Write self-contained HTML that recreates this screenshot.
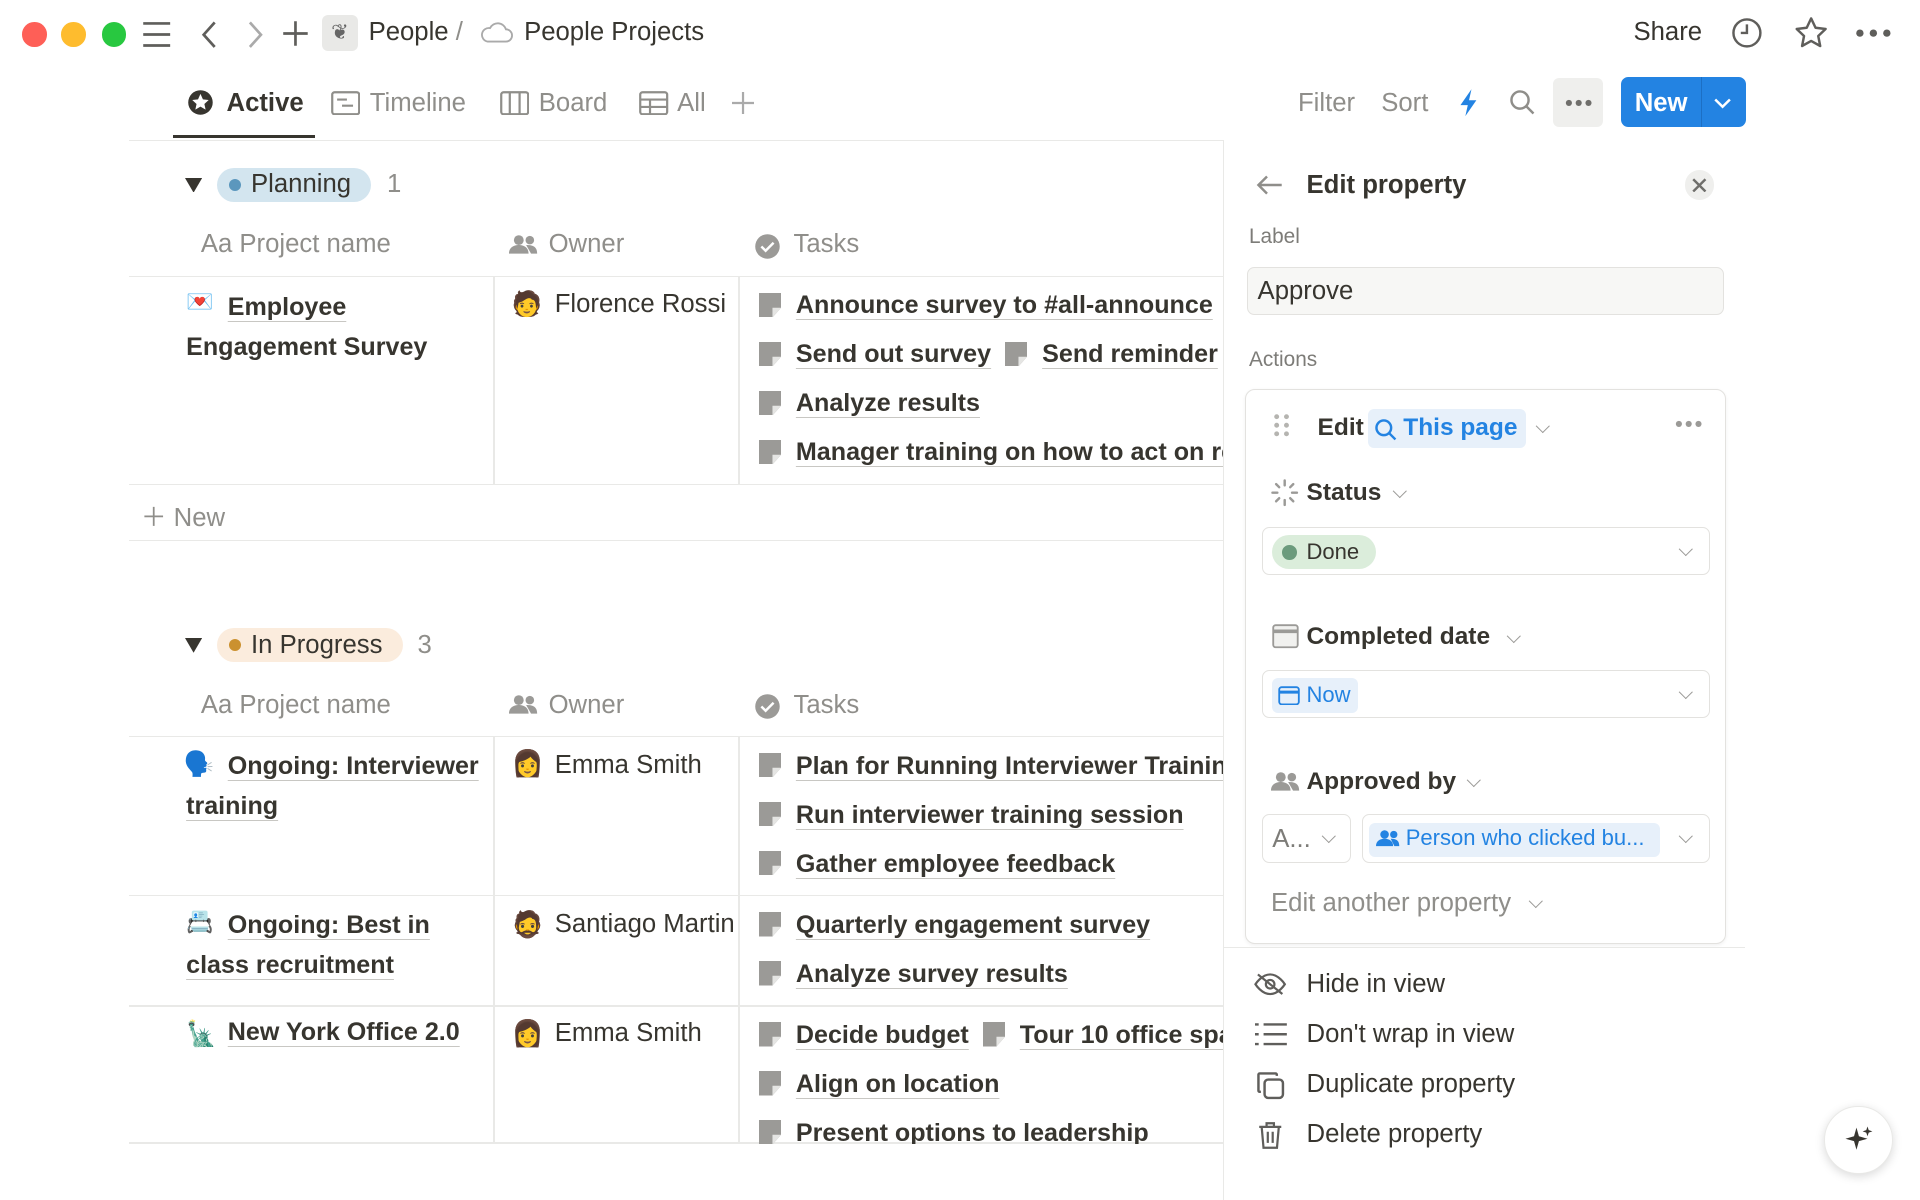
<!DOCTYPE html>
<html><head><meta charset="utf-8"><style>
html,body{margin:0;padding:0;background:#fff;overflow:hidden}
body{width:1920px;height:1200px}
#w{zoom:1.22449;width:1568px;height:980px;position:relative;font-family:"Liberation Sans",sans-serif;color:#37352f;font-size:21px}
.a{position:absolute;white-space:nowrap}
.hl{position:absolute;height:1px;background:#e9e9e7}
.vl{position:absolute;width:1px;background:#e9e9e7}
.g{color:#8f8e8a}
.u{text-decoration:underline;text-decoration-color:#c8c7c3;text-underline-offset:5px;text-decoration-thickness:1px;font-weight:bold;color:#37352f;font-size:20.5px}
.tl{position:absolute;width:20px;height:20px;border-radius:50%}
.ch{position:absolute;width:7px;height:7px;border-right:1.5px solid #9b9a97;border-bottom:1.5px solid #9b9a97;transform:rotate(45deg)}
.box{position:absolute;border:1px solid #e3e2df;border-radius:6px;background:#fff}
.d{display:inline-block;width:18px;height:20px;vertical-align:-3px;margin-right:12px}
.s{font-weight:bold}
</style></head><body><div id="w">
<svg width="0" height="0" style="position:absolute"><defs><symbol id="doc" viewBox="0 0 18 20"><path d="M0 0h18v12l-7 8H0z" fill="#9b9a97"/><path d="M11 20v-8h7" fill="#e5e5e3"/></symbol></defs></svg>
<!-- top bar -->
<div class="tl" style="left:18px;top:18px;background:#fe5f57"></div>
<div class="tl" style="left:50px;top:18px;background:#febc2e"></div>
<div class="tl" style="left:83px;top:18px;background:#28c840"></div>
<svg class="a" style="left:116px;top:17px" width="24" height="22"><path d="M1 2h22M1 11h22M1 20h22" stroke="#5f5e5b" stroke-width="2.2"/></svg>
<svg class="a" style="left:163px;top:16px" width="16" height="24"><path d="M12 2L3 12l9 10" stroke="#5f5e5b" stroke-width="2.2" fill="none"/></svg>
<svg class="a" style="left:200px;top:16px" width="16" height="24"><path d="M4 2l9 10-9 10" stroke="#aaa" stroke-width="2.2" fill="none"/></svg>
<svg class="a" style="left:230px;top:16px" width="22" height="22"><path d="M11 1v20M1 11h20" stroke="#5f5e5b" stroke-width="2.2"/></svg>
<div class="a" style="left:263px;top:12px;width:29px;height:30px;background:#e9e9e7;border-radius:5px;text-align:center;line-height:30px;font-size:17px;color:#666">❦</div>
<div class="a" style="left:301px;top:15px">People <span class="g">/</span></div>
<svg class="a" style="left:391px;top:18px" width="28" height="18"><path d="M7 16h15a5 5 0 0 0 0-10 7 7 0 0 0-13-1A5 5 0 0 0 7 16z" fill="none" stroke="#aaa" stroke-width="1.5"/></svg>
<div class="a" style="left:428px;top:15px">People Projects</div>
<div class="a" style="left:1334px;top:15px">Share</div>
<svg class="a" style="left:1414px;top:14px" width="26" height="26"><circle cx="13" cy="13" r="11" fill="none" stroke="#5f5e5b" stroke-width="2"/><path d="M13 6v7h-5" fill="none" stroke="#5f5e5b" stroke-width="2"/></svg>
<svg class="a" style="left:1465px;top:13px" width="28" height="28"><path d="M14 2l3.6 7.6 8.2 1-6 5.7 1.6 8.2L14 20.4l-7.4 4.1 1.6-8.2-6-5.7 8.2-1z" fill="none" stroke="#5f5e5b" stroke-width="2" stroke-linejoin="round"/></svg>
<svg class="a" style="left:1515px;top:22px" width="30" height="10"><circle cx="4" cy="5" r="3" fill="#5f5e5b"/><circle cx="15" cy="5" r="3" fill="#5f5e5b"/><circle cx="26" cy="5" r="3" fill="#5f5e5b"/></svg>
<!-- tabs -->
<svg class="a" style="left:153px;top:73px" width="22" height="22"><circle cx="11" cy="11" r="10" fill="#37352f"/><path d="M11 4l2 4.5 4.7.5-3.5 3.2 1 4.6L11 14.4 6.8 16.8l1-4.6L4.3 9l4.7-.5z" fill="#fff"/></svg>
<div class="a s" style="left:185px;top:73px">Active</div>
<div class="a" style="left:141px;top:110px;width:116px;height:3px;background:#37352f"></div>
<svg class="a" style="left:270px;top:74px" width="24" height="20"><rect x="1" y="1" width="22" height="18" rx="2" fill="none" stroke="#8f8e8a" stroke-width="1.8"/><path d="M5 7h8M9 12h9" stroke="#8f8e8a" stroke-width="1.8"/></svg>
<div class="a g" style="left:302px;top:73px">Timeline</div>
<svg class="a" style="left:408px;top:74px" width="24" height="20"><rect x="1" y="1" width="22" height="18" rx="2" fill="none" stroke="#8f8e8a" stroke-width="1.8"/><path d="M8 1v18M16 1v18" stroke="#8f8e8a" stroke-width="1.8"/></svg>
<div class="a g" style="left:440px;top:73px">Board</div>
<svg class="a" style="left:522px;top:74px" width="24" height="20"><rect x="1" y="1" width="22" height="18" rx="2" fill="none" stroke="#8f8e8a" stroke-width="1.8"/><path d="M1 7h22M1 13h22M9 7v12" stroke="#8f8e8a" stroke-width="1.8"/></svg>
<div class="a g" style="left:553px;top:73px">All</div>
<svg class="a" style="left:598px;top:75px" width="18" height="18"><path d="M9 0v18M0 9h18" stroke="#aaa" stroke-width="1.8"/></svg>
<div class="a g" style="left:1060px;top:73px">Filter</div>
<div class="a g" style="left:1128px;top:73px">Sort</div>
<svg class="a" style="left:1191px;top:72px" width="18" height="24"><path d="M11 1L2 14h6l-2 9 9-13H9z" fill="#2383e2"/></svg>
<svg class="a" style="left:1232px;top:73px" width="22" height="22"><circle cx="9" cy="9" r="7" fill="none" stroke="#8f8e8a" stroke-width="2"/><path d="M14 14l6 6" stroke="#8f8e8a" stroke-width="2"/></svg>
<div class="a" style="left:1268px;top:64px;width:41px;height:40px;background:#efefed;border-radius:5px"></div>
<svg class="a" style="left:1277px;top:80px" width="24" height="8"><circle cx="4" cy="4" r="2.5" fill="#6f6e6b"/><circle cx="12" cy="4" r="2.5" fill="#6f6e6b"/><circle cx="20" cy="4" r="2.5" fill="#6f6e6b"/></svg>
<div class="a" style="left:1324px;top:63px;width:102px;height:41px;background:#2383e2;border-radius:6px"></div>
<div class="a s" style="left:1335px;top:73px;color:#fff">New</div>
<div class="a" style="left:1389px;top:63px;width:1px;height:41px;background:#1c6fc4"></div>
<svg class="a" style="left:1400px;top:79px" width="14" height="10"><path d="M1 2l6 6 6-6" stroke="#fff" stroke-width="2" fill="none"/></svg>
<div class="hl" style="left:105px;top:114px;width:895px"></div>
<div class="vl" style="left:999px;top:114px;height:866px"></div>

<!-- Planning -->
<svg class="a" style="left:151px;top:145px" width="14" height="12"><path d="M0 0h14L7 12z" fill="#37352f"/></svg>
<div class="a" style="left:177px;top:137px;width:126px;height:28px;background:#d3e5ef;border-radius:14px"></div>
<div class="a" style="left:187px;top:146px;width:10px;height:10px;border-radius:50%;background:#5b97bd"></div>
<div class="a" style="left:205px;top:139px">Planning</div>
<div class="a g" style="left:316px;top:139px">1</div>
<div class="a g" style="left:164px;top:188px">Aa Project name</div>
<svg class="a" style="left:416px;top:191px" width="24" height="18"><circle cx="8" cy="5" r="4" fill="#9b9a97"/><circle cx="17" cy="5" r="3.5" fill="#9b9a97"/><path d="M0 16c0-5 4-7 8-7s8 2 8 7zM14 9c5 0 9 1 9 7h-5" fill="#9b9a97"/></svg>
<div class="a g" style="left:448px;top:188px">Owner</div>
<svg class="a" style="left:616px;top:190px" width="22" height="22"><circle cx="11" cy="11" r="10" fill="#9b9a97"/><path d="M6 11l3.5 3.5L16 8" stroke="#fff" stroke-width="2" fill="none"/></svg>
<div class="a g" style="left:648px;top:188px">Tasks</div>
<div class="hl" style="left:105px;top:225px;width:895px"></div>
<div class="vl" style="left:403px;top:225px;height:170px"></div>
<div class="vl" style="left:603px;top:225px;height:170px"></div>
<div class="a" style="left:152px;top:236px;font-size:18px">💌</div>
<div class="a s" style="left:152px;top:234px;line-height:33px;white-space:normal;width:240px;text-indent:34px;font-size:20.5px"><span class="u">Employee</span><br>Engagement Survey</div>
<div class="a" style="left:418px;top:236px;font-size:20px">🧑</div>
<div class="a" style="left:453px;top:237px">Florence Rossi</div>
<div class="hl" style="left:105px;top:395px;width:895px"></div>
<div class="a g" style="left:115px;top:406px">＋ New</div>
<div class="hl" style="left:105px;top:441px;width:895px"></div>

<!-- In Progress -->
<svg class="a" style="left:151px;top:521px" width="14" height="12"><path d="M0 0h14L7 12z" fill="#37352f"/></svg>
<div class="a" style="left:177px;top:513px;width:152px;height:28px;background:#fbecdd;border-radius:14px"></div>
<div class="a" style="left:187px;top:522px;width:10px;height:10px;border-radius:50%;background:#cb912f"></div>
<div class="a" style="left:205px;top:515px">In Progress</div>
<div class="a g" style="left:341px;top:515px">3</div>
<div class="a g" style="left:164px;top:564px">Aa Project name</div>
<svg class="a" style="left:416px;top:567px" width="24" height="18"><circle cx="8" cy="5" r="4" fill="#9b9a97"/><circle cx="17" cy="5" r="3.5" fill="#9b9a97"/><path d="M0 16c0-5 4-7 8-7s8 2 8 7zM14 9c5 0 9 1 9 7h-5" fill="#9b9a97"/></svg>
<div class="a g" style="left:448px;top:564px">Owner</div>
<svg class="a" style="left:616px;top:566px" width="22" height="22"><circle cx="11" cy="11" r="10" fill="#9b9a97"/><path d="M6 11l3.5 3.5L16 8" stroke="#fff" stroke-width="2" fill="none"/></svg>
<div class="a g" style="left:648px;top:564px">Tasks</div>
<div class="hl" style="left:105px;top:601px;width:895px"></div>
<div class="vl" style="left:403px;top:601px;height:332px"></div>
<div class="vl" style="left:603px;top:601px;height:332px"></div>
<div class="hl" style="left:105px;top:731px;width:895px"></div>
<div class="hl" style="left:105px;top:821px;width:895px"></div>
<div class="hl" style="left:105px;top:933px;width:895px"></div>

<div class="a" style="left:150px;top:612px;font-size:20px">🗣️</div>
<div class="a" style="left:152px;top:609px;line-height:33px;white-space:normal;width:245px;text-indent:34px"><span class="u">Ongoing: Interviewer training</span></div>
<div class="a" style="left:418px;top:612px">👩</div><div class="a" style="left:453px;top:613px">Emma Smith</div>
<div class="a" style="left:152px;top:742px;font-size:18px">📇</div>
<div class="a" style="left:152px;top:739px;line-height:33px;white-space:normal;width:235px;text-indent:34px"><span class="u">Ongoing: Best in class recruitment</span></div>
<div class="a" style="left:418px;top:743px">🧔</div><div class="a" style="left:453px;top:743px">Santiago Martin</div>
<div class="a" style="left:152px;top:832px;font-size:20px">🗽</div>
<div class="a u" style="left:186px;top:831px">New York Office 2.0</div>
<div class="a" style="left:418px;top:832px">👩</div><div class="a" style="left:453px;top:832px">Emma Smith</div>

<!-- tasks -->
<div style="position:absolute;left:604px;top:225px;width:395px;height:720px;overflow:hidden">
<div class="a" style="left:16px;top:13px"><svg class="d"><use href="#doc"/></svg><span class="u">Announce survey to #all-announce</span></div>
<div class="a" style="left:16px;top:53px"><svg class="d"><use href="#doc"/></svg><span class="u">Send out survey</span> &nbsp;<svg class="d"><use href="#doc"/></svg><span class="u">Send reminder</span></div>
<div class="a" style="left:16px;top:93px"><svg class="d"><use href="#doc"/></svg><span class="u">Analyze results</span></div>
<div class="a" style="left:16px;top:133px"><svg class="d"><use href="#doc"/></svg><span class="u">Manager training on how to act on results</span></div>
<div class="a" style="left:16px;top:389px"><svg class="d"><use href="#doc"/></svg><span class="u">Plan for Running Interviewer Training</span></div>
<div class="a" style="left:16px;top:429px"><svg class="d"><use href="#doc"/></svg><span class="u">Run interviewer training session</span></div>
<div class="a" style="left:16px;top:469px"><svg class="d"><use href="#doc"/></svg><span class="u">Gather employee feedback</span></div>
<div class="a" style="left:16px;top:519px"><svg class="d"><use href="#doc"/></svg><span class="u">Quarterly engagement survey</span></div>
<div class="a" style="left:16px;top:559px"><svg class="d"><use href="#doc"/></svg><span class="u">Analyze survey results</span></div>
<div class="a" style="left:16px;top:609px"><svg class="d"><use href="#doc"/></svg><span class="u">Decide budget</span> &nbsp;<svg class="d"><use href="#doc"/></svg><span class="u">Tour 10 office spaces</span></div>
<div class="a" style="left:16px;top:649px"><svg class="d"><use href="#doc"/></svg><span class="u">Align on location</span></div>
<div class="a" style="left:16px;top:689px"><svg class="d"><use href="#doc"/></svg><span class="u">Present options to leadership</span></div>
</div>
<div class="a" style="left:0;top:934px;width:999px;height:46px;background:#fff"></div>

<!-- right panel -->
<svg class="a" style="left:1026px;top:142px" width="22" height="18"><path d="M21 9H2M9 2L2 9l7 7" stroke="#8f8e8a" stroke-width="2" fill="none"/></svg>
<div class="a s" style="left:1067px;top:140px">Edit property</div>
<div class="a" style="left:1376px;top:139px;width:24px;height:24px;border-radius:50%;background:#efefed"></div>
<svg class="a" style="left:1382px;top:145px" width="12" height="12"><path d="M1 1l10 10M11 1L1 11" stroke="#6f6e6b" stroke-width="2"/></svg>
<div class="a" style="left:1020px;top:184px;font-size:17px;color:#7d7c78">Label</div>
<div class="a" style="left:1018px;top:218px;width:388px;height:38px;background:#f7f7f5;border:1px solid #e3e2df;border-radius:6px"></div>
<div class="a" style="left:1027px;top:226px">Approve</div>
<div class="a" style="left:1020px;top:284px;font-size:17px;color:#7d7c78">Actions</div>
<div class="box" style="left:1017px;top:318px;width:391px;height:451px;border-radius:8px;box-shadow:0 1px 3px rgba(0,0,0,.06)"></div>
<svg class="a" style="left:1040px;top:337px" width="14" height="20"><g fill="#b5b4b0"><circle cx="3" cy="3" r="2"/><circle cx="11" cy="3" r="2"/><circle cx="3" cy="10" r="2"/><circle cx="11" cy="10" r="2"/><circle cx="3" cy="17" r="2"/><circle cx="11" cy="17" r="2"/></g></svg>
<div class="a" style="left:1076px;top:338px;font-weight:bold;font-size:20px">Edit</div>
<div class="a" style="left:1117px;top:334px;width:129px;height:32px;background:#e7f0fa;border-radius:5px"></div>
<svg class="a" style="left:1122px;top:341px" width="20" height="20"><circle cx="8" cy="8" r="6" fill="none" stroke="#2383e2" stroke-width="2"/><path d="M12.5 12.5l5 5" stroke="#2383e2" stroke-width="2"/></svg>
<div class="a" style="left:1146px;top:338px;color:#2383e2;font-weight:bold;font-size:20px">This page</div>
<div class="ch" style="left:1256px;top:344px"></div>
<svg class="a" style="left:1367px;top:342px" width="24" height="8"><circle cx="4" cy="4" r="2.5" fill="#9b9a97"/><circle cx="12" cy="4" r="2.5" fill="#9b9a97"/><circle cx="20" cy="4" r="2.5" fill="#9b9a97"/></svg>
<svg class="a" style="left:1037px;top:390px" width="24" height="24"><g stroke="#9b9a97" stroke-width="2" stroke-linecap="round"><path d="M12 2v4M12 18v4M2 12h4M18 12h4M5 5l2.5 2.5M16.5 16.5L19 19M5 19l2.5-2.5M16.5 7.5L19 5"/></g></svg>
<div class="a s" style="left:1067px;top:391px;font-size:20px">Status</div>
<div class="ch" style="left:1139px;top:397px"></div>
<div class="box" style="left:1031px;top:430px;width:364px;height:38px"></div>
<div class="a" style="left:1039px;top:437px;width:85px;height:28px;background:#dbeddb;border-radius:14px"></div>
<div class="a" style="left:1047px;top:445px;width:12px;height:12px;border-radius:50%;background:#6c9b7d"></div>
<div class="a" style="left:1067px;top:440px;font-size:18px">Done</div>
<div class="ch" style="left:1373px;top:444px"></div>
<svg class="a" style="left:1039px;top:510px" width="22" height="20"><rect x="1" y="1" width="20" height="18" rx="2" fill="#f1f1ef" stroke="#9b9a97" stroke-width="1.5"/><path d="M1 6h20" stroke="#9b9a97" stroke-width="3"/></svg>
<div class="a s" style="left:1067px;top:509px;font-size:20px">Completed date</div>
<div class="ch" style="left:1232px;top:515px"></div>
<div class="box" style="left:1031px;top:547px;width:364px;height:38px"></div>
<div class="a" style="left:1039px;top:554px;width:70px;height:28px;background:#e7f0fa;border-radius:5px"></div>
<svg class="a" style="left:1044px;top:560px" width="18" height="16"><rect x="1" y="1" width="16" height="14" rx="2" fill="none" stroke="#2383e2" stroke-width="1.5"/><path d="M1 5h16" stroke="#2383e2" stroke-width="2.5"/></svg>
<div class="a" style="left:1067px;top:557px;font-size:18px;color:#2383e2">Now</div>
<div class="ch" style="left:1373px;top:561px"></div>
<svg class="a" style="left:1038px;top:630px" width="24" height="18"><circle cx="8" cy="5" r="4" fill="#9b9a97"/><circle cx="17" cy="5" r="3.5" fill="#9b9a97"/><path d="M0 16c0-5 4-7 8-7s8 2 8 7zM14 9c5 0 9 1 9 7h-5" fill="#9b9a97"/></svg>
<div class="a s" style="left:1067px;top:627px;font-size:20px">Approved by</div>
<div class="ch" style="left:1200px;top:633px"></div>
<div class="box" style="left:1031px;top:665px;width:71px;height:38px"></div>
<div class="a" style="left:1039px;top:674px;color:#7d7c78">A...</div>
<div class="ch" style="left:1081px;top:679px"></div>
<div class="box" style="left:1112px;top:665px;width:283px;height:38px"></div>
<div class="a" style="left:1118px;top:672px;width:238px;height:28px;background:#e7f0fa;border-radius:5px"></div>
<svg class="a" style="left:1124px;top:677px" width="20" height="16"><circle cx="7" cy="4.5" r="3.5" fill="#2383e2"/><circle cx="14.5" cy="4.5" r="3" fill="#2383e2"/><path d="M0 14c0-4 3-6 7-6s7 2 7 6zM12 8c4 0 7 1 7 6h-4" fill="#2383e2"/></svg>
<div class="a" style="left:1148px;top:674px;font-size:18px;color:#2383e2">Person who clicked bu...</div>
<div class="ch" style="left:1373px;top:679px"></div>
<div class="a" style="left:1038px;top:726px;color:#8f8e8a">Edit another property</div>
<div class="ch" style="left:1250px;top:732px"></div>
<div class="hl" style="left:1000px;top:773px;width:425px"></div>
<svg class="a" style="left:1023px;top:794px" width="28" height="20"><path d="M2 10s5-8 12-8 12 8 12 8-5 8-12 8S2 10 2 10z" fill="none" stroke="#5f5e5b" stroke-width="1.8"/><circle cx="14" cy="10" r="3.5" fill="none" stroke="#5f5e5b" stroke-width="1.8"/><path d="M4 2l20 16" stroke="#5f5e5b" stroke-width="1.8"/></svg>
<div class="a" style="left:1067px;top:792px">Hide in view</div>
<svg class="a" style="left:1025px;top:835px" width="26" height="20"><g stroke="#5f5e5b" stroke-width="2"><path d="M0 2h3M0 10h3M0 18h3M7 2h19M7 10h19M7 18h19"/></g></svg>
<div class="a" style="left:1067px;top:833px">Don't wrap in view</div>
<svg class="a" style="left:1026px;top:875px" width="24" height="24"><rect x="7" y="7" width="15" height="15" rx="3" fill="none" stroke="#5f5e5b" stroke-width="2"/><path d="M4 17H3a1 1 0 0 1-1-1V3a1 1 0 0 1 1-1h13a1 1 0 0 1 1 1v1" fill="none" stroke="#5f5e5b" stroke-width="2"/></svg>
<div class="a" style="left:1067px;top:874px">Duplicate property</div>
<svg class="a" style="left:1027px;top:916px" width="20" height="22"><path d="M1 4h18M7 4V1h6v3M3 4l1.5 17h11L17 4M8 8v9M12 8v9" fill="none" stroke="#5f5e5b" stroke-width="1.8"/></svg>
<div class="a" style="left:1067px;top:915px">Delete property</div>
<div class="a" style="left:1490px;top:903px;width:54px;height:54px;border-radius:50%;background:#fff;box-shadow:0 2px 8px rgba(0,0,0,.15);border:1px solid #e9e9e7"></div>
<svg class="a" style="left:1505px;top:918px" width="26" height="26"><path d="M11 3l2 7 7 2-7 2-2 7-2-7-7-2 7-2z" fill="#37352f"/><path d="M20 2l1 3 3 1-3 1-1 3-1-3-3-1 3-1z" fill="#37352f"/></svg>
</div></body></html>
